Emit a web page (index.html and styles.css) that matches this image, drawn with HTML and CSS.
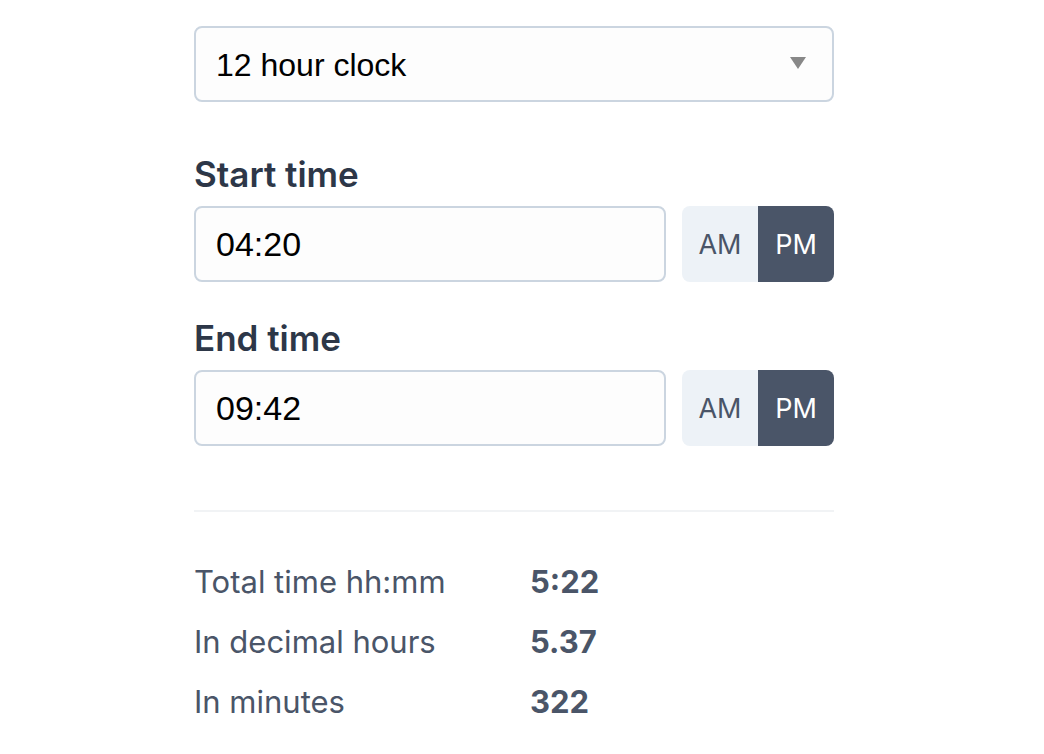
FILE: index.html
```html
<!DOCTYPE html>
<html>
<head>
<meta charset="utf-8">
<link rel="stylesheet" href="styles.css">
</head>
<body>
<div class="calc">
  <div class="select">
    <span class="select-text">12 hour clock</span>
    <span class="caret"></span>
  </div>

  <div class="field">
    <div class="label">Start time</div>
    <div class="row">
      <div class="input">04:20</div>
      <div class="toggle">
        <div class="opt">AM</div>
        <div class="opt on">PM</div>
      </div>
    </div>
  </div>

  <div class="field">
    <div class="label">End time</div>
    <div class="row">
      <div class="input">09:42</div>
      <div class="toggle">
        <div class="opt">AM</div>
        <div class="opt on">PM</div>
      </div>
    </div>
  </div>

  <div class="divider"></div>

  <div class="results">
    <div class="res-label">Total time hh:mm</div><div class="res-val">5:22</div>
    <div class="res-label">In decimal hours</div><div class="res-val">5.37</div>
    <div class="res-label">In minutes</div><div class="res-val">322</div>
  </div>
</div>
</body>
</html>
```

FILE: styles.css
```css
html, body {
  margin: 0;
  padding: 0;
  background: #ffffff;
}
.calc {
  width: 640px;
  margin-left: 194px;
  padding-top: 26px;
  font-family: Inter, "Noto Sans", sans-serif;
}
.select {
  box-sizing: border-box;
  height: 76px;
  border: 2px solid #cbd5e0;
  border-radius: 8px;
  background: #fdfdfd;
  display: flex;
  align-items: center;
  justify-content: space-between;
  padding: 2px 26px 0 20px;
}
.select-text, .input {
  font-family: "Liberation Sans", Arial, sans-serif;
  font-size: 32px;
  color: #000;
}
.input {
  font-size: 34px;
}
.caret {
  width: 0;
  height: 0;
  margin-top: -4px;
  border-left: 8px solid transparent;
  border-right: 8px solid transparent;
  border-top: 12px solid #888888;
}
.field {
  margin-top: 52px;
}
.field + .field {
  margin-top: 36px;
}
.label {
  font-size: 35px;
  font-weight: 600;
  color: #2d3748;
  line-height: 40px;
  margin-bottom: 12px;
}
.row {
  display: flex;
  gap: 16px;
}
.input {
  box-sizing: border-box;
  flex: 1;
  height: 76px;
  border: 2px solid #cbd5e0;
  border-radius: 8px;
  background: #fdfdfd;
  display: flex;
  align-items: center;
  padding-left: 20px;
}
.toggle {
  display: flex;
  width: 152px;
  height: 76px;
  border-radius: 8px;
  overflow: hidden;
}
.opt {
  flex: 1;
  display: flex;
  align-items: center;
  justify-content: center;
  font-size: 27px;
  color: #4a5568;
  background: #edf2f7;
}
.opt.on {
  background: #4a5568;
  color: #ffffff;
}
.divider {
  margin-top: 64px;
  height: 2px;
  background: #f1f3f5;
}
.results {
  margin-top: 40px;
  display: grid;
  grid-template-columns: 336px 1fr;
  font-size: 31px;
  line-height: 60px;
  color: #4a5568;
}
.res-val {
  font-weight: 700;
}
```
